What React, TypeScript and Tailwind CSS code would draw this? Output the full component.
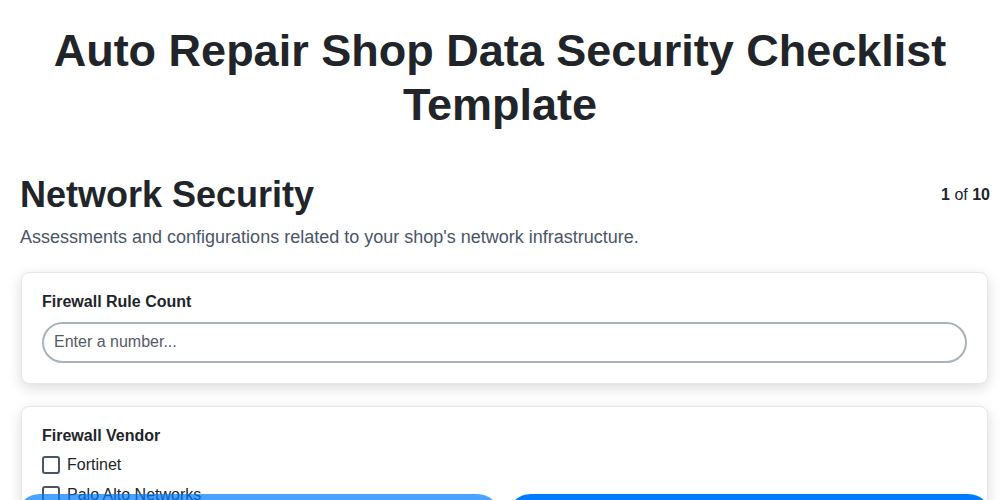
import { useState } from 'react';

const VENDORS = ['Fortinet', 'Palo Alto Networks', 'Cisco', 'SonicWall', 'Other'];

export default function App() {
    const [count, setCount] = useState('');
    const [vendors, setVendors] = useState<string[]>([]);

    const toggleVendor = (v: string) =>
        setVendors((prev) => (prev.includes(v) ? prev.filter((x) => x !== v) : [...prev, v]));

    return (
        <div className="min-h-screen bg-white text-[#212529] font-['Liberation_Sans',Arial,sans-serif] pt-6 pb-24">
            {/* Title */}
            <h1 className="px-5 text-center text-[45px] leading-[1.2] font-bold">
                Auto Repair Shop Data Security Checklist Template
            </h1>

            <div className="pl-5 pr-[10px]">
                {/* Section header */}
                <div className="mt-[41px] flex items-center justify-between">
                    <h2 className="text-[36px] leading-[1.2] font-bold">Network Security</h2>
                    <div className="text-base text-[#212529]">
                        <span className="font-bold">1</span> of <span className="font-bold">10</span>
                    </div>
                </div>
                <p className="mt-[9px] text-lg leading-6 text-[#4a5568]">
                    Assessments and configurations related to your shop's network infrastructure.
                </p>

                {/* Question: Firewall Rule Count */}
                <div className="mt-[23px] ml-px mr-[2px] bg-white border border-[#e6e6ec] rounded-lg p-5 shadow-[0_4px_14px_rgba(0,0,0,0.14)]">
                    <label className="block text-base leading-[1.15] font-bold mb-[10px]">Firewall Rule Count</label>
                    <input
                        type="number"
                        value={count}
                        onChange={(e) => setCount(e.target.value)}
                        placeholder="Enter a number..."
                        className="block w-full h-[41px] rounded-full border-2 border-[#a9b1ba] pl-[10px] pr-4 text-base text-[#212529] placeholder:text-[#555a66] outline-none bg-white"
                    />
                </div>

                {/* Question: Firewall Vendor */}
                <div className="mt-[22px] ml-px mr-[2px] bg-white border border-[#e6e6ec] rounded-lg p-5 shadow-[0_4px_14px_rgba(0,0,0,0.14)]">
                    <div className="text-base leading-[1.15] font-bold mb-2">Firewall Vendor</div>
                    <div className="flex flex-col gap-[6px]">
                        {VENDORS.map((v) => {
                            const checked = vendors.includes(v);
                            return (
                                <label key={v} className="flex items-center h-6 gap-[7px] text-base cursor-pointer">
                                    <span
                                        onClick={() => toggleVendor(v)}
                                        className={
                                            checked
                                                ? 'w-[18px] h-[18px] rounded-[3px] border-2 border-[#007bff] bg-[#007bff]'
                                                : 'w-[18px] h-[18px] rounded-[3px] border-2 border-[#4a5568] bg-white'
                                        }
                                    />
                                    <span>{v}</span>
                                </label>
                            );
                        })}
                    </div>
                </div>
            </div>

            {/* Navigation bar */}
            <div className="fixed top-[494px] left-4 right-2 flex gap-[6px]">
                <button className="flex-1 h-12 rounded-full bg-[#007bff] opacity-70 text-white font-bold text-base">
                    Previous
                </button>
                <button className="flex-1 h-12 rounded-full bg-[#007bff] text-white font-bold text-base">
                    Next
                </button>
            </div>
        </div>
    );
}
